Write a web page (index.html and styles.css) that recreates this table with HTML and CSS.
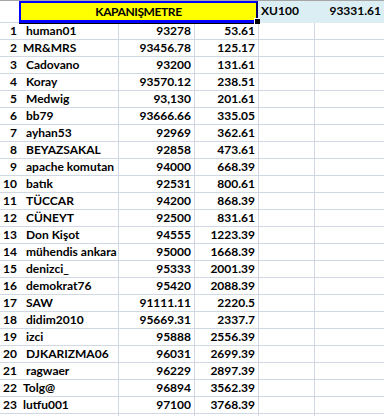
FILE: index.html
```html
<!DOCTYPE html>
<html>
<head>
<meta charset="utf-8">
<link rel="stylesheet" href="styles.css">
</head>
<body>
<div class="sheet">
  <div class="hdr">
    <div class="ha"></div>
    <div class="title">KAPANIŞMETRE</div>
    <div class="he">XU100</div>
    <div class="hf">93331.61</div>
  </div>
  <div class="row"><div class="a">1</div><div class="b sp">human01</div><div class="c">93278</div><div class="d">53.61</div><div class="e"></div><div class="f"></div></div>
  <div class="row"><div class="a">2</div><div class="b">MR&amp;MRS</div><div class="c">93456.78</div><div class="d">125.17</div><div class="e"></div><div class="f"></div></div>
  <div class="row"><div class="a">3</div><div class="b sp">Cadovano</div><div class="c">93200</div><div class="d">131.61</div><div class="e"></div><div class="f"></div></div>
  <div class="row"><div class="a">4</div><div class="b sp">Koray</div><div class="c">93570.12</div><div class="d">238.51</div><div class="e"></div><div class="f"></div></div>
  <div class="row"><div class="a">5</div><div class="b sp">Medwig</div><div class="c">93,130</div><div class="d">201.61</div><div class="e"></div><div class="f"></div></div>
  <div class="row"><div class="a">6</div><div class="b sp">bb79</div><div class="c">93666.66</div><div class="d">335.05</div><div class="e"></div><div class="f"></div></div>
  <div class="row"><div class="a">7</div><div class="b sp">ayhan53</div><div class="c">92969</div><div class="d">362.61</div><div class="e"></div><div class="f"></div></div>
  <div class="row"><div class="a">8</div><div class="b sp">BEYAZSAKAL</div><div class="c">92858</div><div class="d">473.61</div><div class="e"></div><div class="f"></div></div>
  <div class="row"><div class="a">9</div><div class="b sp">apache komutan</div><div class="c">94000</div><div class="d">668.39</div><div class="e"></div><div class="f"></div></div>
  <div class="row"><div class="a">10</div><div class="b sp">batık</div><div class="c">92531</div><div class="d">800.61</div><div class="e"></div><div class="f"></div></div>
  <div class="row"><div class="a">11</div><div class="b sp">TÜCCAR</div><div class="c">94200</div><div class="d">868.39</div><div class="e"></div><div class="f"></div></div>
  <div class="row"><div class="a">12</div><div class="b sp">CÜNEYT</div><div class="c">92500</div><div class="d">831.61</div><div class="e"></div><div class="f"></div></div>
  <div class="row"><div class="a">13</div><div class="b sp">Don Kişot</div><div class="c">94555</div><div class="d">1223.39</div><div class="e"></div><div class="f"></div></div>
  <div class="row"><div class="a">14</div><div class="b sp">mühendis ankara</div><div class="c">95000</div><div class="d">1668.39</div><div class="e"></div><div class="f"></div></div>
  <div class="row"><div class="a">15</div><div class="b sp">denizci_</div><div class="c">95333</div><div class="d">2001.39</div><div class="e"></div><div class="f"></div></div>
  <div class="row"><div class="a">16</div><div class="b sp">demokrat76</div><div class="c">95420</div><div class="d">2088.39</div><div class="e"></div><div class="f"></div></div>
  <div class="row"><div class="a">17</div><div class="b sp">SAW</div><div class="c">91111.11</div><div class="d">2220.5</div><div class="e"></div><div class="f"></div></div>
  <div class="row"><div class="a">18</div><div class="b sp">didim2010</div><div class="c">95669.31</div><div class="d">2337.7</div><div class="e"></div><div class="f"></div></div>
  <div class="row"><div class="a">19</div><div class="b sp">izci</div><div class="c">95888</div><div class="d">2556.39</div><div class="e"></div><div class="f"></div></div>
  <div class="row"><div class="a">20</div><div class="b sp">DJKARIZMA06</div><div class="c">96031</div><div class="d">2699.39</div><div class="e"></div><div class="f"></div></div>
  <div class="row"><div class="a">21</div><div class="b sp">ragwaer</div><div class="c">96229</div><div class="d">2897.39</div><div class="e"></div><div class="f"></div></div>
  <div class="row"><div class="a">22</div><div class="b">Tolg@</div><div class="c">96894</div><div class="d">3562.39</div><div class="e"></div><div class="f"></div></div>
  <div class="row"><div class="a">23</div><div class="b">lutfu001</div><div class="c">97100</div><div class="d">3768.39</div><div class="e"></div><div class="f"></div></div>
  <div class="row"><div class="a"></div><div class="b"></div><div class="c"></div><div class="d"></div><div class="e"></div><div class="f"></div></div>
</div>
</body>
</html>
```
FILE: styles.css
```css
html, body {
  margin: 0;
  padding: 0;
  background: #ffffff;
}
body {
  font-family: Lato, "Liberation Sans", sans-serif;
  font-weight: 700;
  font-size: 12px;
  color: #000000;
}
.sheet {
  width: 384px;
  height: 416px;
  overflow: hidden;
}
.hdr {
  display: flex;
  height: 22px;
  border-top: 1px solid #a6a6a6;
  line-height: 20px;
}
.ha {
  width: 19px;
  flex: none;
  box-sizing: border-box;
  border-bottom: 1px solid #d0d7e5;
}
.title {
  position: relative;
  width: 239px;
  flex: none;
  box-sizing: border-box;
  background: #ffff00;
  border: 2px solid #0000ff;
  border-bottom-width: 3px;
  border-right-color: #000066;
  box-shadow: 0 1px 0 #000000;
  text-align: center;
  line-height: 18px;
  letter-spacing: -0.4px;
}
.title::after {
  content: "";
  position: absolute;
  right: -4px;
  bottom: -4px;
  width: 5px;
  height: 5px;
  background: #000000;
  border: 1px solid #ffffff;
  border-right: none;
  border-bottom: none;
}
.he {
  width: 56px;
  flex: none;
  box-sizing: border-box;
  background: #daeef3;
  padding-left: 3px;
}
.hf {
  flex: 1;
  background: #daeef3;
  text-align: right;
  padding-right: 3px;
}
.row {
  display: flex;
  height: 17px;
  box-sizing: border-box;
  border-bottom: 1px solid #d0d7e5;
  line-height: 16px;
  white-space: nowrap;
}
.row > div {
  box-sizing: border-box;
  flex: none;
  overflow: hidden;
}
.a {
  width: 19px;
  text-align: right;
  padding-right: 2px;
}
.b {
  width: 100px;
  border-right: 1px solid #d0d7e5;
  padding-left: 4px;
}
.b.sp {
  padding-left: 7px;
}
.c {
  width: 76px;
  border-right: 1px solid #d0d7e5;
  text-align: right;
  padding-right: 3px;
}
.d {
  width: 64px;
  border-right: 1px solid #d0d7e5;
  text-align: right;
  padding-right: 3px;
}
.e {
  width: 56px;
  border-right: 1px solid #d0d7e5;
}
.row > .f {
  flex: 1;
}
```
